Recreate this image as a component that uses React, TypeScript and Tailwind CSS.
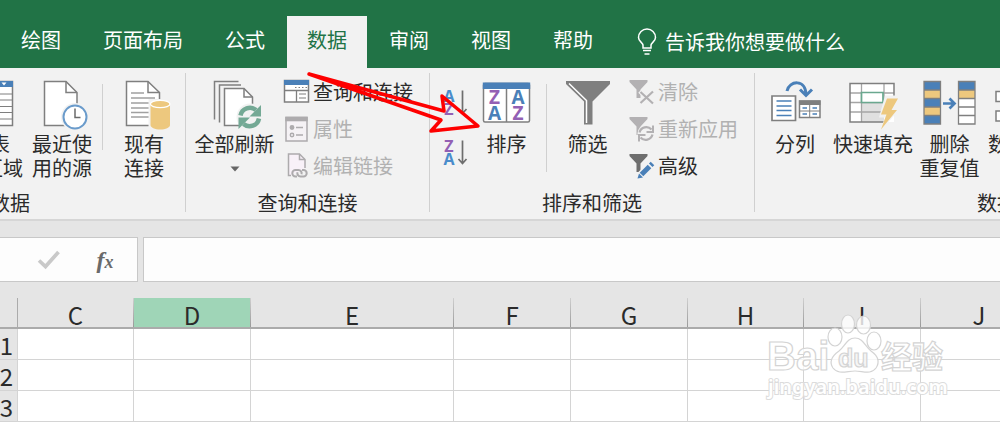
import React from 'react';

const LINE = '#7f7f7f';
const BLUE = '#4a80b8';
const GOLD = '#edc87e';

function TableIcon() {
  return <svg width="14" height="52" viewBox="0 0 14 52" fill="none">
      <path d="M-10 1.500H12.500V45.500H-10" fill="#fff" stroke={LINE} strokeWidth="1.500" />
      <path d="M-10 1h23v6h-23z" fill={BLUE} />
      <path d="M1.500 2.500h5l-2.500 3z" fill="#fff" />
      <path d="M0 14h12M0 20h12M0 26.500h12M0 32.500h12M0 39h12" stroke={LINE} />
    </svg>;
}

function RecentIcon() {
  return <svg width="52" height="52" viewBox="0 0 52 52" fill="none">
      <path d="M8.500 1.500H30L41 12.500V45.500H8.500z" fill="#fff" stroke={LINE} strokeWidth="1.500" />
      <path d="M30 1.500V12.500H41" stroke={LINE} strokeWidth="1.500" />
      <circle cx="39" cy="37" r="14" fill="#f2f2f2" />
      <circle cx="39" cy="37" r="11.500" fill="#fff" stroke="#6a9bcb" strokeWidth="2" />
      <path d="M39 28.500V37.500H44.500" stroke="#6b6b6b" strokeWidth="1.500" />
    </svg>;
}

function ConnectionsIcon() {
  return <svg width="54" height="52" viewBox="0 0 54 52" fill="none">
      <path d="M9.500 1.500H31L42.500 12.500V45.500H9.500z" fill="#fff" stroke={LINE} strokeWidth="1.500" />
      <path d="M31 1.500V12.500H42.500" stroke={LINE} strokeWidth="1.500" />
      <path d="M14 13h13M14 18h24M14 23h18M14 28h18M14 32.500h18M14 37h18" stroke="#a0a0a0" strokeWidth="1.300" />
      <path d="M31.500 19H55V52H31.500z" fill="#f2f2f2" />
      <path d="M33.500 24v21c0 2.500 4.300 4.500 9.700 4.500S53 47.500 53 45V24z" fill={GOLD} />
      <ellipse cx="43.200" cy="24" rx="9.800" ry="3.700" fill={GOLD} stroke="#fff" strokeWidth="1.300" />
    </svg>;
}

function RefreshAllIcon() {
  return <svg width="54" height="52" viewBox="0 0 54 52" fill="none" stroke={LINE} strokeWidth="1.500">
      <path d="M6.500 39.500V1.500H30.500" />
      <path d="M11.500 42.500V5H33" />
      <path d="M16.500 45.500V8.500H36L44.500 17V45.500z" fill="#fff" />
      <path d="M36 8.500V17H44.500" />
      <circle cx="42" cy="37" r="13.500" fill="#f2f2f2" stroke="none" />
      <path d="M32.500 35.500A9.500 9.500 0 0 1 48 30" stroke="#74a995" strokeWidth="4.500" />
      <path d="M51 38.500A9.500 9.500 0 0 1 35.500 44" stroke="#74a995" strokeWidth="4.500" />
      <path d="M53 25v11.500H41.500z" fill="#74a995" stroke="none" />
      <path d="M30.500 49V37.500H42z" fill="#74a995" stroke="none" />
    </svg>;
}

function QueryIcon() {
  return <svg width="28" height="28" viewBox="0 0 28 28" fill="none">
      <path d="M1.500 2.500h24v21.500h-24z" fill="#fff" stroke={LINE} strokeWidth="1.500" />
      <path d="M1 2h25v5H1z" fill={BLUE} />
      <path d="M2 12.500h23M13.500 12.500V24" stroke={LINE} strokeWidth="1.300" />
      <path d="M12 9.500h12" stroke={LINE} strokeDasharray="1.500 2" />
      <path d="M16 16h7M16 20h7" stroke={LINE} strokeWidth="1.200" />
    </svg>;
}

function PropertiesIcon() {
  return <svg width="28" height="28" viewBox="0 0 28 28" fill="none" stroke="#adabad" strokeWidth="1.500">
      <path d="M3 2.500h21v23.500H3z" fill="#f5f2f5" />
      <path d="M2.300 1.700h22.400v4.600H2.300z" fill="#adabad" stroke="none" />
      <circle cx="9" cy="12.500" r="1.700" fill="#adabad" />
      <circle cx="9" cy="20" r="1.700" />
      <path d="M13 12.500h7M13 20h7" />
    </svg>;
}

function EditLinksIcon() {
  return <svg width="28" height="28" viewBox="0 0 28 28" fill="none" stroke="#adabad" strokeWidth="1.500">
      <path d="M8 23.500H5.500V2H16.500L22 7.500V16" fill="#f8f1f8" />
      <path d="M16.500 2V7.500H22" />
      <path d="M14 24.500h-1.500a3.200 3.200 0 0 1 0-6.400h3a3.200 3.200 0 0 1 3 4.200" strokeWidth="2" />
      <path d="M19 18h1.500a3.200 3.200 0 0 1 0 6.400h-3a3.200 3.200 0 0 1-3-4.200" strokeWidth="2" />
    </svg>;
}

function SortSmallIcon({ first, second }: { first: 'A' | 'Z'; second: 'A' | 'Z' }) {
  return <svg width="28" height="34" viewBox="0 0 28 34" fill="none" fontFamily="Open Sans, sans-serif" fontWeight="700" fontSize="16">
      <text x="8" y="16" textAnchor="middle" fill={first === 'A' ? '#4a8ccb' : '#9360b4'}>{first}</text>
      <text x="8" y="29" textAnchor="middle" fill={second === 'A' ? '#4a8ccb' : '#9360b4'}>{second}</text>
      <path d="M21.500 4.500V27M17.500 23l4 4.500 4-4.500" stroke="#6e6e6e" strokeWidth="1.700" />
    </svg>;
}

function SortIcon() {
  return <svg width="56" height="52" viewBox="0 0 56 52" fill="none" fontFamily="Open Sans, sans-serif" fontWeight="700" fontSize="19" textAnchor="middle">
      <rect x="4.500" y="3.500" width="46" height="38.500" rx="1.500" fill="#fff" stroke={LINE} strokeWidth="1.500" />
      <path d="M3.800 2.500h47.400v6.500H3.800z" fill={BLUE} />
      <path d="M27.500 9v33" stroke={LINE} strokeWidth="1.500" />
      <text x="15.500" y="24" fill="#9360b4">Z</text>
      <text x="15.500" y="40" fill={BLUE}>A</text>
      <text x="39" y="24" fill={BLUE}>A</text>
      <text x="39" y="40" fill="#9360b4">Z</text>
    </svg>;
}

function FunnelIcon() {
  return <svg width="52" height="52" viewBox="0 0 52 52" fill="none">
      <path d="M4 1H48V4L30.500 21.500V44.500H22V21.500L4 4z" fill="#7f7f7f" />
      <path d="M7 3.500L24.500 20.500V43" stroke="#fff" strokeWidth="1.500" />
    </svg>;
}

function SmallFunnel({ kind }: { kind: 'clear' | 'reapply' | 'advanced' }) {
  const color = kind === 'advanced' ? '#6e6e6e' : '#b3b1b3';
  return <svg width="28" height="28" viewBox="0 0 28 28" fill="none">
      <path d="M1.500 2H19.500V4L12.500 11.500V20H8.500V11.500L1.500 4z" fill={color} />
      {kind === 'clear' && <>
          <path d="M12 13l13 12.500M25 12.500L12.500 25.500" stroke="#f2f2f2" strokeWidth="5" />
          <path d="M12.500 14l12.500 11.500M25 13.500L12.500 25" stroke={color} strokeWidth="2.200" />
        </>}
      {kind === 'reapply' && <>
          <circle cx="18" cy="18.500" r="8.500" fill="#f2f2f2" />
          <path d="M11.500 17.500a7 7 0 0 1 12-3M24.500 19.500a7 7 0 0 1-12 3" stroke={color} strokeWidth="2.200" />
          <path d="M25 10.500v6.500h-6.500M11 26.500V20h6.500" stroke={color} strokeWidth="2" />
        </>}
      {kind === 'advanced' && <>
          <path d="M10 26L26 10" stroke="#f2f2f2" strokeWidth="8" />
          <path d="M9.500 26.500l1.500-5 4 4z" fill={BLUE} />
          <path d="M13.500 22.500L21.500 14.500M22.700 13.300L24.500 11.500" stroke={BLUE} strokeWidth="5" />
        </>}
    </svg>;
}

function SplitIcon() {
  return <svg width="54" height="52" viewBox="0 0 54 52" fill="none">
      <path d="M4 16h23.500v24.500H4z" fill="#fff" stroke={LINE} strokeWidth="1.700" />
      <path d="M8.500 21h15M8.500 26h15M8.500 30.500h15M8.500 35.500h15" stroke={BLUE} strokeWidth="1.700" />
      <path d="M31.500 21h20.500v16.500H31.500z" fill="#fff" stroke={LINE} strokeWidth="1.500" />
      <path d="M31 20.500h21.500v4.500H31z" fill={LINE} />
      <path d="M41.700 25v12M32 31h20" stroke={LINE} />
      <path d="M34.500 28h4.500M44.500 28h4.500M34.500 34h4.500M44.500 34h4.500" stroke={BLUE} strokeWidth="1.700" />
      <path d="M19 11C21 0.500 38 -1.500 38 15" stroke={BLUE} strokeWidth="3" />
      <path d="M32 9.500L38 15.500 44 9.500" stroke={BLUE} strokeWidth="3" />
    </svg>;
}

function FlashFillIcon() {
  return <svg width="54" height="52" viewBox="0 0 54 52" fill="none">
      <path d="M4 3.500h44v38.500H4z" fill="#fff" />
      <path d="M15.500 23H38v19H15.500z" fill="#e0e0e0" />
      <path d="M15.500 3.500V42M38 3.500V24M4 13h44M4 22.500h34M4 32h34" stroke="#a5a5a5" strokeWidth="1.300" />
      <path d="M38 42H4V3.500H48V17" stroke={LINE} strokeWidth="1.500" />
      <path d="M15.500 12.500h21.500v10H15.500z" fill="#fff" stroke="#6aa88f" strokeWidth="1.700" />
      <path d="M39 15.500h15L50 29h4L33.500 52 39 37.500h-6z" fill="#f2f2f2" />
      <path d="M41 18.500h11L45.500 30h5.500L35 49.500 40.500 34.500h-5.500z" fill={GOLD} />
    </svg>;
}

function DedupeIcon() {
  return <svg width="56" height="52" viewBox="0 0 56 52" fill="none">
      <path d="M2 1.500h16.500V44H2z" fill={BLUE} />
      <path d="M2 10h16.500v8.500H2zM2 27h16.500v8.500H2z" fill={GOLD} />
      <path d="M36.500 1.500H53V44H36.500z" fill="#fff" />
      <path d="M36.500 1.500H53V10H36.500z" fill={BLUE} />
      <path d="M36.500 10H53v8.500H36.500z" fill={GOLD} />
      <path d="M2 1.500h16.500V44H2zM2 10h16.500M2 18.500h16.500M2 27h16.500M2 35.500h16.500M36.500 1.500H53V44H36.500zM36.500 10H53M36.500 18.500H53M36.500 27H53M36.500 35.500H53" stroke={LINE} strokeWidth="1.300" />
      <path d="M21 23.500h10M27.500 18.500l5 5-5 5" stroke={BLUE} strokeWidth="2.700" />
    </svg>;
}

function ValidationIcon() {
  return <svg width="20" height="52" viewBox="0 0 20 52" fill="#fff" stroke={LINE} strokeWidth="1.500">
      <path d="M8 11.500h20v10H8zM8 31h20v10H8z" />
    </svg>;
}

function BigButton({ icon, lines, className }: { icon: React.ReactNode; lines: string[]; className: string }) {
  return <button type="button" className={`flex shrink-0 flex-col items-center pt-[7px] ${className}`}>
      {icon}
      {lines.map(line => <span key={line} className="h-6 whitespace-nowrap">{line}</span>)}
    </button>;
}

function SmallButton({ icon, label, disabled }: { icon: React.ReactNode; label: string; disabled?: boolean }) {
  return <button type="button" disabled={disabled} className="flex h-[37px] items-center gap-0.5 whitespace-nowrap disabled:text-[#b1b1b1]">
      {icon}
      <span>{label}</span>
    </button>;
}

function Group({ label, className, labelClass = 'justify-center', children }: { label: string; className: string; labelClass?: string; children: React.ReactNode }) {
  return <section className={`flex flex-col overflow-hidden ${className}`}>
      <div className="flex h-[118px] items-start">{children}</div>
      <div className={`flex h-6 whitespace-nowrap ${labelClass}`}>{label}</div>
    </section>;
}

const Separator = () => <div className="mb-[3px] w-px shrink-0 bg-[#d0d0d0]" />;

const tabs = ['绘图', '页面布局', '公式', '数据', '审阅', '视图', '帮助'];
const columns = ['C', 'D', 'E', 'F', 'G', 'H', 'I', 'J'];
const rows = [1, 2, 3];

function Watermark() {
  return <svg className="pointer-events-none absolute left-[764px] top-[310px]" width="190" height="92" viewBox="0 0 190 92" fill="#fff" fillOpacity="0.8" stroke="#d4d4d4" strokeWidth="1.200" fontFamily="Liberation Sans, Noto Sans CJK SC, sans-serif" fontWeight="700">
      <text x="3" y="60" fontSize="40">Bai</text>
      <ellipse cx="71" cy="27" rx="7" ry="9" />
      <ellipse cx="84" cy="14" rx="6.500" ry="9" />
      <ellipse cx="99.500" cy="15" rx="7" ry="9" />
      <ellipse cx="110" cy="31" rx="7" ry="9" />
      <path d="M91 28C99 28 101 36 107 41C114 46 116 52 112 58C107 65 99 61 91 61C83 61 74 65 69 58C65 52 68 46 75 41C81 36 83 28 91 28Z" />
      <text x="74" y="57" fontSize="25" fill="#f4f4f4">du</text>
      <text x="117" y="58" fontSize="31">经验</text>
      <text x="4" y="84" fontSize="20" fontFamily="Noto Sans, sans-serif" fontWeight="600" fillOpacity="1" stroke="#dcdcdc" strokeWidth="2" paintOrder="stroke">jingyan.baidu.com</text>
    </svg>;
}

export default function App() {
  return <div className="relative min-h-screen w-full overflow-hidden bg-[#e5e5e5] font-['Noto_Sans_CJK_SC',sans-serif] text-[20px] leading-6 text-[#2b2b2b]">
      <header className="flex bg-[#217346] pl-px pt-4 text-white">
        <nav className="flex gap-0.5">
          {tabs.map(tab => <button key={tab} type="button" className={tab === '数据' ? 'h-[52px] bg-[#f2f2f2] px-5 pb-1 text-[#217346]' : 'h-[52px] px-5 pb-1'}>
              {tab}
            </button>)}
        </nav>
        <button type="button" className="ml-6 flex items-center gap-2 whitespace-nowrap">
          <svg width="20" height="28" viewBox="0 0 20 28" fill="none" stroke="#fff" strokeWidth="1.500">
            <path d="M6 20V17.500C6 14.500 1.500 13.500 1.500 9.500A8.500 8.500 0 0 1 18.500 9.500C18.500 13.500 14 14.500 14 17.500V20z" />
            <path d="M6 22.500h8M7.500 26h5" strokeWidth="1.700" />
          </svg>
          告诉我你想要做什么
        </button>
      </header>

      <div className="flex overflow-hidden border-b-2 border-[#d6d6d6] bg-[#f2f2f2] pb-1 pt-[5px]">
        <Group label="数据" className="w-[185px] shrink-0" labelClass="w-[30px] justify-end">
          <button type="button" className="flex w-6 shrink-0 flex-col pt-[7px]">
            <TableIcon />
            <span className="flex h-6 w-[10px] justify-end">表</span>
            <span className="flex h-6 w-[23px] justify-end whitespace-nowrap">区域</span>
          </button>
          <BigButton icon={<RecentIcon />} lines={['最近使', '用的源']} className="w-[76px]" />
          <div className="ml-0.5 mt-[11px] h-[66px] w-px shrink-0 bg-[#d0d0d0]" />
          <BigButton icon={<ConnectionsIcon />} lines={['现有', '连接']} className="w-[82px]" />
        </Group>
        <Separator />
        <Group label="查询和连接" className="w-[243px] shrink-0">
          <button type="button" className="flex w-[97px] shrink-0 flex-col items-center pt-[7px]">
            <RefreshAllIcon />
            <span className="h-6 whitespace-nowrap">全部刷新</span>
            <svg className="mt-2.5" width="10" height="6" viewBox="0 0 10 6"><path d="M0.500 0.500h9L5 5.500z" fill="#666" /></svg>
          </button>
          <div className="flex flex-col">
            <SmallButton icon={<QueryIcon />} label="查询和连接" />
            <SmallButton icon={<PropertiesIcon />} label="属性" disabled />
            <SmallButton icon={<EditLinksIcon />} label="编辑链接" disabled />
          </div>
        </Group>
        <Separator />
        <Group label="排序和筛选" className="w-[324px] shrink-0">
          <div className="flex shrink-0 flex-col gap-4 pl-[11px] pt-[13px]">
            <button type="button" aria-label="升序"><SortSmallIcon first="A" second="Z" /></button>
            <button type="button" aria-label="降序"><SortSmallIcon first="Z" second="A" /></button>
          </div>
          <BigButton icon={<SortIcon />} lines={['排序']} className="w-[75px]" />
          <div className="ml-0.5 mt-[11px] h-[88px] w-px shrink-0 bg-[#d0d0d0]" />
          <BigButton icon={<FunnelIcon />} lines={['筛选']} className="w-[81px]" />
          <div className="flex flex-col">
            <SmallButton icon={<SmallFunnel kind="clear" />} label="清除" disabled />
            <SmallButton icon={<SmallFunnel kind="reapply" />} label="重新应用" disabled />
            <SmallButton icon={<SmallFunnel kind="advanced" />} label="高级" />
          </div>
        </Group>
        <Separator />
        <Group label="数据" className="min-w-0 flex-1" labelClass="pl-[222px]">
          <BigButton icon={<SplitIcon />} lines={['分列']} className="w-[80px]" />
          <BigButton icon={<FlashFillIcon />} lines={['快速填充']} className="w-[76px]" />
          <BigButton icon={<DedupeIcon />} lines={['删除', '重复值']} className="w-[77px]" />
          <button type="button" className="flex shrink-0 flex-col items-start pt-[7px]">
            <ValidationIcon />
            <span className="h-6 whitespace-nowrap">数</span>
          </button>
        </Group>
      </div>

      <div className="flex gap-[5px] py-4">
        <div className="flex h-[45px] w-[138px] shrink-0 items-center justify-end gap-8 border border-l-0 border-[#c8c8c8] bg-[#fdfdfd] pr-5">
          <button type="button" aria-label="输入">
            <svg width="24" height="20" viewBox="0 0 24 20" fill="none"><path d="M2 10.500l6.500 6L21.500 2" stroke="#c9c9c9" strokeWidth="3.700" /></svg>
          </button>
          <button type="button" className="w-6 font-['Liberation_Serif',serif] text-2xl font-bold italic text-[#6a6a6a]">
            f<span className="text-lg">x</span>
          </button>
        </div>
        <input type="text" aria-label="编辑栏" className="h-[45px] min-w-0 flex-1 border border-r-0 border-[#c8c8c8] bg-[#fdfdfd] px-2 outline-none" />
      </div>

      <table className="w-[1038px] min-w-full table-fixed border-separate border-spacing-0 text-2xl leading-7">
        <colgroup>
          <col className="w-[18px]" />
          <col className="w-[116px]" />
          <col className="w-[117px]" />
          <col className="w-[203px]" />
          <col className="w-[117px]" />
          <col className="w-[117px]" />
          <col className="w-[116px]" />
          <col className="w-[117px]" />
          <col className="w-[117px]" />
        </colgroup>
        <thead>
          <tr className="h-[31px]">
            <th className="border-b-2 border-r border-b-[#ababab] border-r-[#ababab] p-0" />
            {columns.map(col => <th key={col} scope="col" className={col === 'D' ? 'border-b-2 border-b-[#ababab] bg-[#9fd5b7] p-0 font-normal' : 'border-b-2 border-b-[#ababab] p-0 font-normal'}>
                <div className="flex h-[29px]">
                  <span className="flex-1 pt-[3px]">{col}</span>
                  <span className="w-px bg-linear-to-b from-[#cfcfcf] to-[#9a9a9a]" />
                </div>
              </th>)}
          </tr>
        </thead>
        <tbody>
          {rows.map(row => <tr key={row} className="h-[30px]">
              <th scope="row" className="border-b border-r border-[#d4d4d4] bg-[#e5e5e5] p-0 font-normal">
                <div className="flex h-[30px] items-center justify-end pr-1 pt-0.5">{row}</div>
              </th>
              {columns.map(col => <td key={col} className="border-b border-r border-[#d4d4d4] bg-white p-0" />)}
            </tr>)}
        </tbody>
      </table>

      <svg className="pointer-events-none absolute left-[300px] top-[64px]" width="190" height="76" viewBox="0 0 190 76" fill="none">
        <path d="M9 10L144 47L142 32L178 62L131 67L141 56Z" stroke="#fe0000" strokeWidth="3.500" strokeLinejoin="round" />
      </svg>
      <Watermark />
    </div>;
}
